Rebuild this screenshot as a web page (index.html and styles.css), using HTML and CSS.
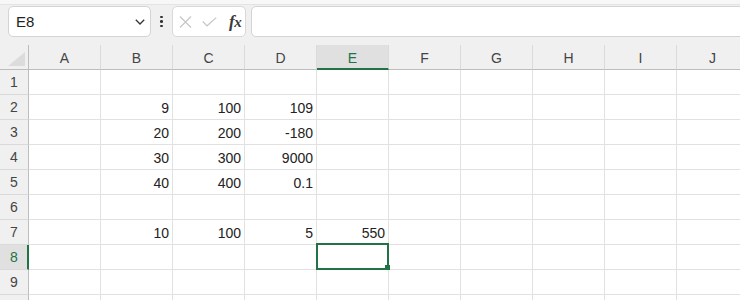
FILE: index.html
```html
<!DOCTYPE html>
<html lang="ja">
<head>
<meta charset="utf-8">
<title>Sheet</title>
<link rel="stylesheet" href="styles.css">
</head>
<body>
<div class="app">
  <div class="topstrip"></div>
  <div class="toolbar">
    <div class="namebox">
      <span class="name">E8</span>
      <svg class="chev" width="10" height="6" viewBox="0 0 10 6"><path d="M0.8 0.8 L5 5 L9.2 0.8" fill="none" stroke="#333" stroke-width="1.3"/></svg>
    </div>
    <div class="dots"><span></span><span></span><span></span></div>
    <div class="fxbox">
      <svg class="ico" width="13" height="12" viewBox="0 0 13 12"><path d="M1 0.5 L12 11.5 M12 0.5 L1 11.5" stroke="#c6c6c6" stroke-width="1.2" fill="none"/></svg>
      <svg class="ico" width="15" height="10" viewBox="0 0 15 10"><path d="M0.8 4.5 L5 8.8 L14.2 0.6" stroke="#c6c6c6" stroke-width="1.2" fill="none"/></svg>
      <span class="fx">f<span class="x">x</span></span>
    </div>
    <div class="formula"></div>
  </div>
  <div class="grid">
    <div class="corner"><span class="tri"></span></div>
    <div class="ch">A</div><div class="ch">B</div><div class="ch">C</div><div class="ch">D</div><div class="ch sel">E</div><div class="ch">F</div><div class="ch">G</div><div class="ch">H</div><div class="ch">I</div><div class="ch">J</div>

    <div class="rh">1</div><div class="c"></div><div class="c"></div><div class="c"></div><div class="c"></div><div class="c"></div><div class="c"></div><div class="c"></div><div class="c"></div><div class="c"></div><div class="c"></div>
    <div class="rh">2</div><div class="c"></div><div class="c">9</div><div class="c">100</div><div class="c">109</div><div class="c"></div><div class="c"></div><div class="c"></div><div class="c"></div><div class="c"></div><div class="c"></div>
    <div class="rh">3</div><div class="c"></div><div class="c">20</div><div class="c">200</div><div class="c">-180</div><div class="c"></div><div class="c"></div><div class="c"></div><div class="c"></div><div class="c"></div><div class="c"></div>
    <div class="rh">4</div><div class="c"></div><div class="c">30</div><div class="c">300</div><div class="c">9000</div><div class="c"></div><div class="c"></div><div class="c"></div><div class="c"></div><div class="c"></div><div class="c"></div>
    <div class="rh">5</div><div class="c"></div><div class="c">40</div><div class="c">400</div><div class="c">0.1</div><div class="c"></div><div class="c"></div><div class="c"></div><div class="c"></div><div class="c"></div><div class="c"></div>
    <div class="rh">6</div><div class="c"></div><div class="c"></div><div class="c"></div><div class="c"></div><div class="c"></div><div class="c"></div><div class="c"></div><div class="c"></div><div class="c"></div><div class="c"></div>
    <div class="rh">7</div><div class="c"></div><div class="c">10</div><div class="c">100</div><div class="c">5</div><div class="c">550</div><div class="c"></div><div class="c"></div><div class="c"></div><div class="c"></div><div class="c"></div>
    <div class="rh sel">8</div><div class="c"></div><div class="c"></div><div class="c"></div><div class="c"></div><div class="c active"></div><div class="c"></div><div class="c"></div><div class="c"></div><div class="c"></div><div class="c"></div>
    <div class="rh">9</div><div class="c"></div><div class="c"></div><div class="c"></div><div class="c"></div><div class="c"></div><div class="c"></div><div class="c"></div><div class="c"></div><div class="c"></div><div class="c"></div>
    <div class="rh"></div><div class="c"></div><div class="c"></div><div class="c"></div><div class="c"></div><div class="c"></div><div class="c"></div><div class="c"></div><div class="c"></div><div class="c"></div><div class="c"></div>
  </div>
</div>
</body>
</html>
```

FILE: styles.css
```css
* { box-sizing: border-box; }
html, body { margin: 0; padding: 0; }
body {
  width: 740px;
  height: 300px;
  overflow: hidden;
  background: #f0f0f0;
  font-family: "Liberation Sans", Arial, sans-serif;
  color: #222;
}
.app { width: 760px; }
.topstrip {
  height: 5px;
  background: #f7f7f7;
  border-bottom: 1px solid #e4e4e4;
}
.toolbar {
  display: flex;
  align-items: center;
  height: 40px;
  padding: 1px 0 8px 8px;
  background: #f0f0f0;
}
.namebox {
  width: 143px;
  height: 31px;
  background: #fff;
  border: 1px solid #d4d4d4;
  border-radius: 5px;
  display: flex;
  align-items: center;
  justify-content: space-between;
  padding: 0 5px 0 7px;
}
.name { font-size: 15px; color: #222; }
.chev { display: block; margin-top: 1px; }
.dots {
  width: 21px;
  display: flex;
  flex-direction: column;
  align-items: center;
  gap: 2px;
}
.dots span {
  width: 2.6px;
  height: 2.6px;
  border-radius: 50%;
  background: #333;
}
.fxbox {
  width: 74px;
  height: 31px;
  background: #fff;
  border: 1px solid #d9d9d9;
  border-radius: 5px;
  display: flex;
  align-items: center;
  padding: 0 0 0 6px;
}
.fxbox .ico { display: block; margin-right: 10px; }
.fxbox .ico + .ico { margin-top: 1px; margin-right: 12px; }
.fx {
  font-family: "Liberation Serif", "Times New Roman", serif;
  font-style: italic;
  font-size: 17px;
  font-weight: bold;
  color: #3a3a3a;
  letter-spacing: -0.5px;
}
.fx .x { font-size: 15px; }
.formula {
  flex: 1;
  margin-left: 5px;
  height: 31px;
  background: #fff;
  border: 1px solid #d4d4d4;
  border-radius: 5px;
}
.grid {
  display: grid;
  grid-template-columns: 29px repeat(10, 72px);
  grid-auto-rows: 25px;
  background: #fff;
}
.corner {
  position: relative;
  background: #f0f0f0;
  border-right: 1px solid #bdbdbd;
  border-bottom: 1px solid #bdbdbd;
}
.tri {
  position: absolute;
  right: 3px;
  bottom: 3px;
  width: 0;
  height: 0;
  border-left: 17px solid transparent;
  border-bottom: 14px solid #dcdcdc;
}
.ch {
  background: #f0f0f0;
  border-right: 1px solid #dadada;
  border-bottom: 1px solid #bdbdbd;
  display: flex;
  align-items: center;
  justify-content: center;
  font-size: 14px;
  color: #444;
  padding-top: 1px;
}
.ch.sel {
  background: #e0e0e0;
  color: #217346;
  border-bottom: 2px solid #217346;
  padding-top: 2px;
}
.rh {
  background: #f0f0f0;
  border-right: 1px solid #bdbdbd;
  border-bottom: 1px solid #dadada;
  display: flex;
  align-items: center;
  justify-content: center;
  font-size: 14px;
  color: #444;
}
.rh.sel {
  background: #e0e0e0;
  color: #217346;
  border-right: 2px solid #217346;
  padding-left: 1px;
}
.c {
  border-right: 1px solid #e1e1e1;
  border-bottom: 1px solid #e1e1e1;
  display: flex;
  align-items: center;
  justify-content: flex-end;
  padding: 1px 3px 0 0;
  font-size: 14px;
  color: #222;
}
.c.active { position: relative; }
.c.active::after {
  content: "";
  position: absolute;
  top: -2px;
  left: -1px;
  right: -1px;
  bottom: -1px;
  border: 2px solid #217346;
}
.c.active::before {
  content: "";
  position: absolute;
  right: -2px;
  bottom: -1px;
  width: 5px;
  height: 5px;
  background: #217346;
  z-index: 2;
}
```
